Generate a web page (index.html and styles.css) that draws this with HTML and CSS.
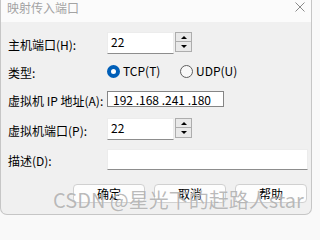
FILE: index.html
```html
<!DOCTYPE html>
<html lang="zh">
<head>
<meta charset="utf-8">
<title>映射传入端口</title>
<link rel="stylesheet" href="styles.css">
</head>
<body>
<div class="window">
  <div class="titlebar">
    <span class="title">映射传入端口</span>
    <svg class="close" width="10" height="10" viewBox="0 0 10 10"><path d="M0.5 0.5 L9.5 9.5 M9.5 0.5 L0.5 9.5" stroke="#8a8a8a" stroke-width="1" fill="none"/></svg>
  </div>
  <div class="content">
    <div class="row row1">
      <label class="lbl">主机端口(H):</label>
      <div class="ctl">
        <div class="input num">22</div>
        <div class="spin"><span class="sb"><i class="up"></i></span><span class="sb"><i class="down"></i></span></div>
      </div>
    </div>
    <div class="row row2">
      <label class="lbl">类型:</label>
      <div class="ctl">
        <span class="opt opt1"><span class="radio on"></span>TCP(T)</span>
        <span class="opt"><span class="radio"></span>UDP(U)</span>
      </div>
    </div>
    <div class="row row3">
      <label class="lbl">虚拟机 IP 地址(A):</label>
      <div class="ctl">
        <div class="ip">192 .168 .241 .180</div>
      </div>
    </div>
    <div class="row row4">
      <label class="lbl">虚拟机端口(P):</label>
      <div class="ctl">
        <div class="input num">22</div>
        <div class="spin"><span class="sb"><i class="up"></i></span><span class="sb"><i class="down"></i></span></div>
      </div>
    </div>
    <div class="row row5">
      <label class="lbl">描述(D):</label>
      <div class="ctl">
        <div class="input desc"></div>
      </div>
    </div>
    <div class="buttons">
      <button class="btn">确定</button>
      <button class="btn">取消</button>
      <button class="btn">帮助</button>
    </div>
  </div>
</div>
<div class="watermark">CSDN @星光下的赶路人star</div>
</body>
</html>
```
FILE: styles.css
```css
html, body {
  margin: 0;
  padding: 0;
  background: #f9f9f9;
  font-family: "Noto Sans CJK SC", "Noto Sans", sans-serif;
  font-size: 12px;
  color: #000;
}
body {
  width: 314px;
  height: 222px;
  overflow: hidden;
  position: relative;
}
.window {
  width: 312px;
  height: 215px;
  box-sizing: border-box;
  background: #f0f0f0;
  border: 1px solid #c6c6c6;
  border-top: none;
  border-radius: 0 0 7px 7px;
  overflow: hidden;
}
.titlebar {
  height: 22px;
  background: #fbfbfb;
  display: flex;
  align-items: center;
  justify-content: space-between;
  padding: 0 6px 0 6px;
}
.title {
  color: #a3a3a3;
  font-size: 12px;
  line-height: 12px;
  margin-top: -7px;
}
.close {
  margin-top: -8px;
}
.content {
  padding: 10px 0 0 7px;
}
.row {
  display: flex;
  align-items: center;
}
.lbl {
  width: 99px;
  flex: none;
  line-height: 14px;
  padding-top: 3px;
  white-space: nowrap;
}
.ctl {
  display: flex;
  align-items: flex-start;
}
.row1 { height: 22px; }
.row2 { height: 18px; margin-top: 8px; }
.row3 { height: 16px; margin-top: 11px; }
.row4 { height: 22px; margin-top: 11px; }
.row5 { height: 21px; margin-top: 9px; }
.input {
  background: #fff;
  box-sizing: border-box;
  border: 1px solid #ececec;
  border-bottom: 1px solid #8d8d8d;
  height: 22px;
  line-height: 18px;
  padding-left: 3px;
}
.num { width: 67px; }
.desc { width: 201px; height: 21px; }
.spin {
  width: 17px;
  margin-left: 1px;
  display: flex;
  flex-direction: column;
}
.sb {
  height: 10px;
  box-sizing: border-box;
  border: 1px solid #adadad;
  background: #e9e9e9;
  display: flex;
  align-items: center;
  justify-content: center;
}
.sb + .sb { border-top: none; }
.up, .down {
  width: 0;
  height: 0;
  border-left: 3px solid transparent;
  border-right: 3px solid transparent;
}
.up { border-bottom: 3px solid #000; }
.down { border-top: 3px solid #000; }
.opt {
  display: flex;
  align-items: center;
  line-height: 14px;
}
.opt1 { width: 73px; }
.radio {
  width: 13px;
  height: 13px;
  box-sizing: border-box;
  border-radius: 50%;
  border: 1px solid #5f5f5f;
  background: #f8f8f8;
  margin-right: 3px;
  flex: none;
}
.radio.on {
  border: 4px solid #005fb8;
  background: #fff;
}
.ip {
  width: 117px;
  height: 16px;
  box-sizing: border-box;
  border: 1px solid #858585;
  background: #fff;
  line-height: 16px;
  padding-left: 5px;
  white-space: pre;
}
.buttons {
  display: flex;
  gap: 9px;
  margin-top: 14px;
  padding-left: 65px;
}
.btn {
  width: 72px;
  height: 19px;
  box-sizing: border-box;
  border: 1px solid #d0d0d0;
  border-radius: 4px;
  background: #fdfdfd;
  font-family: inherit;
  font-size: 12px;
  line-height: 15px;
  padding: 0;
  color: #000;
}
.watermark {
  position: absolute;
  left: 53px;
  top: 190px;
  font-size: 20px;
  line-height: 20px;
  color: rgba(140, 140, 140, 0.6);
  white-space: nowrap;
  text-shadow: 0 0 1px rgba(255,255,255,0.8);
}
```
